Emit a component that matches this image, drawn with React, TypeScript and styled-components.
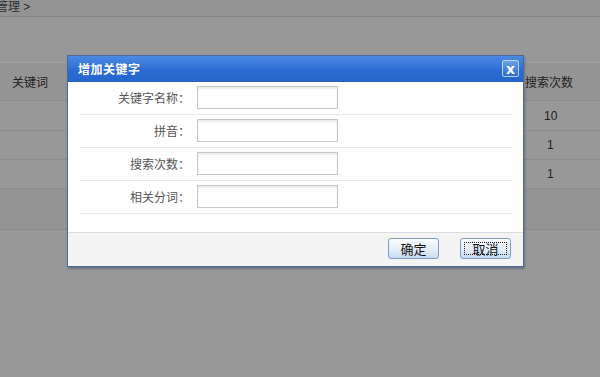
import styled, { createGlobalStyle } from "styled-components";

const GlobalStyle = createGlobalStyle`
  html, body {
    margin: 0;
    padding: 0;
    background: #999999;
    font-family: "Liberation Sans", "Noto Sans CJK SC", sans-serif;
    font-size: 12px;
  }
`;

// Page behind the mask
const Page = styled.div`
  position: relative;
  width: 600px;
  height: 377px;
  overflow: hidden;
  background: #989898;
`;

const Breadcrumb = styled.div`
  height: 16px;
  line-height: 14px;
  margin-left: -4px;
  color: #2e2e2e;
  background: #939393;
  border-bottom: 1px solid #7f8a86;
  font-size: 12px;
`;

const Spacer = styled.div`
  height: 45px;
`;

const Table = styled.div`
  display: flex;
  flex-direction: column;
  border-top: 1px solid #a3a3a3;
`;

const Row = styled.div<{ $height: number; $header?: boolean }>`
  display: grid;
  grid-template-columns: 60px 1fr 75px;
  align-items: center;
  height: ${(p) => p.$height}px;
  border-bottom: 1px solid #8c8c8c;
  background: ${(p) => (p.$header ? "#949494" : "#989898")};
  color: #222;
`;

const Cell = styled.div<{ $align?: string; $indent?: number }>`
  text-align: ${(p) => p.$align || "center"};
  padding-left: ${(p) => p.$indent || 0}px;
  font-size: 12px;
  white-space: nowrap;
`;

const Pager = styled.div`
  height: 40px;
  background: #939393;
  border-bottom: 1px solid #8a8a8a;
`;

// Dialog
const Dialog = styled.div`
  position: absolute;
  left: 67px;
  top: 55px;
  width: 455px;
  height: 210px;
  border: 1px solid #4b6a98;
  background: #ffffff;
  box-shadow: 1px 2px 2px rgba(80, 90, 110, 0.6);
  display: flex;
  flex-direction: column;
`;

const TitleBar = styled.div`
  height: 25px;
  display: flex;
  align-items: center;
  justify-content: space-between;
  padding: 0 4px 0 10px;
  background: linear-gradient(#4b8ae3, #2a6bd2 60%, #2466cc);
  border-bottom: 1px solid #2b62b8;
`;

const Title = styled.span`
  color: #ffffff;
  font-weight: bold;
  font-size: 12px;
  letter-spacing: 0.5px;
`;

const CloseButton = styled.button`
  width: 17px;
  height: 17px;
  padding: 0;
  border: 1px solid #b9d2f3;
  border-radius: 2px;
  background: linear-gradient(#6aa0ea, #2e6cd0);
  color: #ffffff;
  font-weight: bold;
  font-size: 14px;
  line-height: 14px;
  font-family: "DejaVu Sans", sans-serif;
  display: flex;
  align-items: center;
  justify-content: center;
`;

const Body = styled.div`
  flex: 1;
  padding: 0 11px 0 12px;
`;

const FieldRow = styled.div`
  display: flex;
  align-items: center;
  gap: 7px;
  padding: 4px 0 5px;
  border-bottom: 1px solid #e6e6e6;
`;

const Label = styled.label`
  width: 110px;
  text-align: right;
  color: #555555;
  font-size: 12px;
  font-family: "Noto Sans CJK SC", sans-serif;
`;

const TextInput = styled.input`
  width: 139px;
  height: 21px;
  padding: 0;
  border: 1px solid #c6c6c6;
  box-shadow: inset 0 2px 2px #ececec;
  background: #ffffff;
`;

const Footer = styled.div`
  height: 34px;
  box-sizing: border-box;
  display: flex;
  align-items: flex-start;
  justify-content: flex-end;
  gap: 21px;
  padding: 5px 12px 0 0;
  background: #f4f4f4;
  border-top: 1px solid #dcdcdc;
`;

const DialogButton = styled.button<{ $focused?: boolean }>`
  width: 51px;
  height: 21px;
  padding: 0;
  border: 1px solid #7f9cc0;
  border-radius: 3px;
  background: linear-gradient(#fafcfe, #e4eef9 55%, #c7dbf2);
  color: #111;
  font-size: 13px;
  font-family: "Noto Sans CJK SC", sans-serif;
  line-height: 17px;
  outline: ${(p) => (p.$focused ? "1px dotted #222" : "none")};
  outline-offset: -5px;
`;

const fields = ["关键字名称：", "拼音：", "搜索次数：", "相关分词："];
const counts = [
  { value: "10", indent: 19, height: 29 },
  { value: "1", indent: 22, height: 28 },
  { value: "1", indent: 22, height: 28 },
];

const App = () => {
  return (
    <Page>
      <GlobalStyle />
      <Breadcrumb>管理 &gt;</Breadcrumb>
      <Spacer />
      <Table>
        <Row $height={37} $header>
          <Cell>关键词</Cell>
          <Cell />
          <Cell $align="left">搜索次数</Cell>
        </Row>
        {counts.map((c, i) => (
          <Row key={i} $height={c.height}>
            <Cell />
            <Cell />
            <Cell $align="left" $indent={c.indent}>
              {c.value}
            </Cell>
          </Row>
        ))}
        <Pager />
      </Table>

      <Dialog>
        <TitleBar>
          <Title>增加关键字</Title>
          <CloseButton>x</CloseButton>
        </TitleBar>
        <Body>
          {fields.map((f) => (
            <FieldRow key={f}>
              <Label>{f}</Label>
              <TextInput type="text" />
            </FieldRow>
          ))}
        </Body>
        <Footer>
          <DialogButton>确定</DialogButton>
          <DialogButton $focused>取消</DialogButton>
        </Footer>
      </Dialog>
    </Page>
  );
};

export default App;
